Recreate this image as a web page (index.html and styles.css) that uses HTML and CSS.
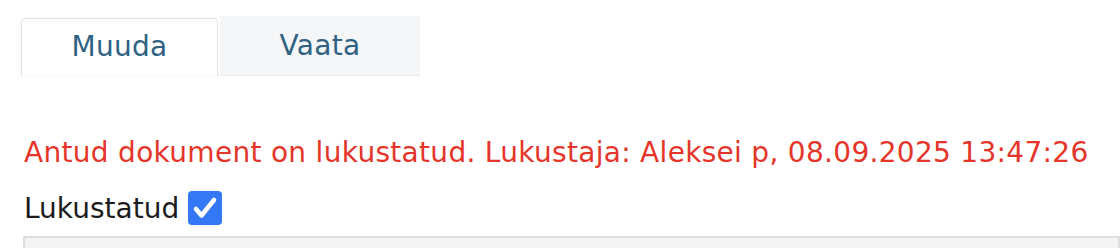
FILE: index.html
```html
<!DOCTYPE html>
<html>
<head>
<meta charset="utf-8">
<link rel="stylesheet" href="styles.css">
</head>
<body>
<div class="page">
  <div class="tabs">
    <div class="tab active">Muuda</div>
    <div class="tab">Vaata</div>
  </div>
  <p class="lock-msg">Antud dokument on lukustatud. Lukustaja: Aleksei p, 08.09.2025 13:47:26</p>
  <div class="lock-row">
    <span class="lock-label">Lukustatud</span>
    <span class="checkbox">
      <svg viewBox="0 0 34 34" width="34" height="34"><path d="M8 18 L13.5 24.5 L26 9" fill="none" stroke="#fff" stroke-width="4.5" stroke-linecap="round" stroke-linejoin="round"/></svg>
    </span>
  </div>
  <div class="panel"></div>
</div>
</body>
</html>
```
FILE: styles.css
```css
html, body {
  margin: 0;
  padding: 0;
  background: #fff;
}
.page {
  padding: 16px 0 0 21px;
  font-family: "DejaVu Sans", Verdana, sans-serif;
  letter-spacing: 0.3px;
}
.tabs {
  display: flex;
  align-items: flex-end;
  height: 60px;
}
.tab {
  box-sizing: border-box;
  height: 60px;
  width: 200px;
  background: #f5f6f8;
  color: #2f6282;
  font-size: 28px;
  display: flex;
  align-items: center;
  justify-content: center;
  border-bottom: 1px solid #e9ebee;
}
.tab.active {
  width: 197px;
  height: 58px;
  margin-right: 2px;
  background: #fff;
  border: 1px solid #e3e3e3;
  border-bottom: none;
  border-radius: 5px 5px 0 0;
  box-shadow: 0 0 2px rgba(0,0,0,0.08);
  padding-bottom: 2px;
}
.lock-msg {
  margin: 60px 0 0 3px;
  color: #e5352a;
  font-size: 28px;
  line-height: 34px;
}
.lock-row {
  display: flex;
  align-items: center;
  margin: 21px 0 0 3px;
  height: 34px;
}
.lock-label {
  color: #1c1c1c;
  font-size: 28px;
  letter-spacing: 0;
  margin-right: 9px;
}
.checkbox {
  width: 34px;
  height: 34px;
  background: #3478f6;
  border-radius: 4px;
  display: inline-flex;
}
.panel {
  margin: 11px 0 0 2px;
  height: 40px;
  background: #f4f4f4;
  border: 2px solid #dedede;
}
```
